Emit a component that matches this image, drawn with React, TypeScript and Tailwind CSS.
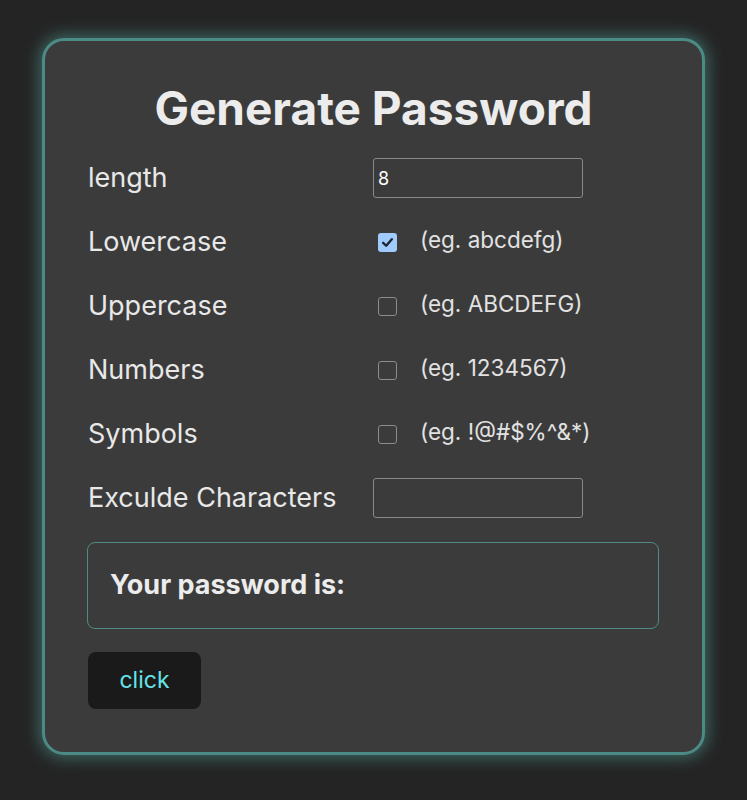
import React, { useState } from 'react';

type Option = {
  key: string;
  label: string;
  example: string;
};

const options: Option[] = [
  { key: 'lower', label: 'Lowercase', example: '(eg. abcdefg)' },
  { key: 'upper', label: 'Uppercase', example: '(eg. ABCDEFG)' },
  { key: 'numbers', label: 'Numbers', example: '(eg. 1234567)' },
  { key: 'symbols', label: 'Symbols', example: '(eg. !@#$%^&*)' },
];

function Checkbox({ checked, onClick }: { checked: boolean; onClick: () => void }) {
  return (
    <button
      onClick={onClick}
      className={
        checked
          ? 'flex h-[19px] w-[19px] items-center justify-center rounded-[3px] bg-[#9fcbff]'
          : 'h-[19px] w-[19px] rounded-[3px] border border-[#8c8c8c] bg-transparent'
      }
    >
      {checked && (
        <svg width="13" height="13" viewBox="0 0 12 12">
          <path d="M2 6.3 L4.8 9 L10 3" fill="none" stroke="#1d2733" strokeWidth="2.2" strokeLinecap="round" strokeLinejoin="round" />
        </svg>
      )}
    </button>
  );
}

export default function App() {
  const [length, setLength] = useState('8');
  const [exclude, setExclude] = useState('');
  const [checks, setChecks] = useState<Record<string, boolean>>({ lower: true });

  return (
    <div className="min-h-[800px] bg-[#242424] px-[42px] pt-[38px] pb-[46px] font-['Inter',sans-serif] text-[#e8e8e8]">
      <div className="rounded-[22px] border-[3px] border-[#4c8a85] bg-[#3b3b3b] px-[43px] pt-[42px] pb-[43px] shadow-[0_0_16px_3px_rgba(82,160,150,0.55)]">
        <h1 className="text-center text-[46px] font-bold leading-[50px] text-[#ececec]">Generate Password</h1>

        <div className="mt-[13px] grid grid-cols-[285px_1fr]">
          <div className="flex h-16 items-center text-[27px]">length</div>
          <div className="flex h-16 items-center">
            <input
              value={length}
              onChange={(e) => setLength(e.target.value)}
              className="h-10 w-[210px] rounded-[3px] border border-[#8a8a8a] bg-transparent px-[4px] text-[18px] text-white outline-none"
            />
          </div>

          {options.map((opt) => (
            <React.Fragment key={opt.key}>
              <div className="flex h-16 items-center text-[27px]">{opt.label}</div>
              <div className="flex h-16 items-center">
                <div className="ml-[5px] flex items-center">
                  <Checkbox
                    checked={!!checks[opt.key]}
                    onClick={() => setChecks((prev) => ({ ...prev, [opt.key]: !prev[opt.key] }))}
                  />
                </div>
                <span className="ml-[23px] -mt-[5px] text-[22.5px] text-[#e2e2e2]">{opt.example}</span>
              </div>
            </React.Fragment>
          ))}

          <div className="flex h-16 items-center text-[27px]">Exculde Characters</div>
          <div className="flex h-16 items-center">
            <input
              value={exclude}
              onChange={(e) => setExclude(e.target.value)}
              className="h-10 w-[210px] rounded-[3px] border border-[#8a8a8a] bg-transparent px-[4px] text-[18px] text-white outline-none"
            />
          </div>
        </div>

        <div className="mt-3 -ml-px flex h-[87px] items-center rounded-[8px] border border-[#4f8a85] px-[22px]">
          <span className="text-[27px] font-bold text-[#ececec]">Your password is:</span>
        </div>

        <button className="mt-[23px] h-[57px] w-[113px] rounded-[8px] bg-[#1a1a1a] text-[23px] text-[#66e3e8]">
          click
        </button>
      </div>
    </div>
  );
}
